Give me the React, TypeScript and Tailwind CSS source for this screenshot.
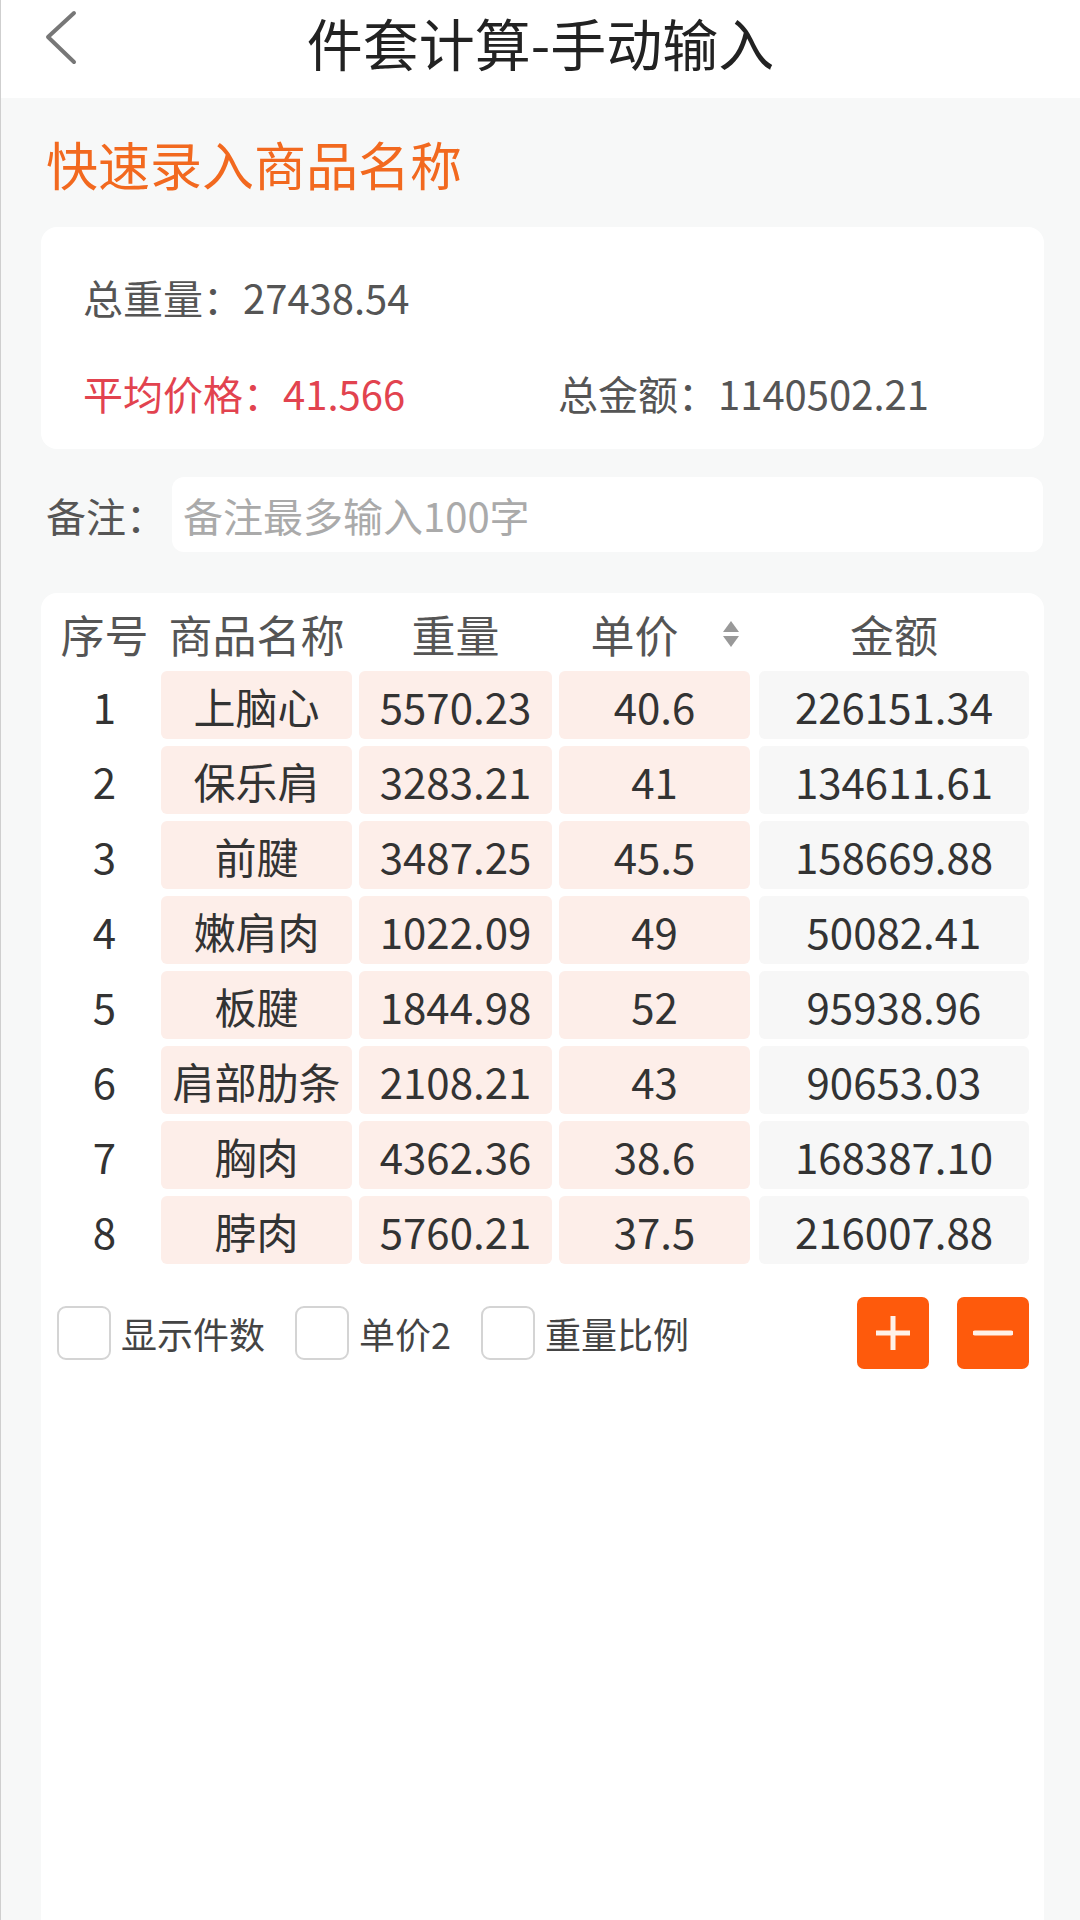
import React from 'react';

const rows = [
  { no: 1, name: '上脑心', weight: '5570.23', price: '40.6', amount: '226151.34' },
  { no: 2, name: '保乐肩', weight: '3283.21', price: '41', amount: '134611.61' },
  { no: 3, name: '前腱', weight: '3487.25', price: '45.5', amount: '158669.88' },
  { no: 4, name: '嫩肩肉', weight: '1022.09', price: '49', amount: '50082.41' },
  { no: 5, name: '板腱', weight: '1844.98', price: '52', amount: '95938.96' },
  { no: 6, name: '肩部肋条', weight: '2108.21', price: '43', amount: '90653.03' },
  { no: 7, name: '胸肉', weight: '4362.36', price: '38.6', amount: '168387.10' },
  { no: 8, name: '脖肉', weight: '5760.21', price: '37.5', amount: '216007.88' },
];

const font = { fontFamily: '"Noto Sans CJK SC", "Noto Sans", sans-serif' };

function Checkbox({ label }: { label: string }) {
  return (
    <div className="flex items-center gap-[10px]">
      <div className="h-[54px] w-[54px] rounded-[9px] border-2 border-[#d4d4d4] bg-white" />
      <span className="text-[36px] leading-none text-[#444]">{label}</span>
    </div>
  );
}

export default function App() {
  return (
    <div
      className="flex h-[1920px] w-[1080px] flex-col overflow-hidden border-l border-[#cfcfcf] bg-[#f7f8f8]"
      style={font}
    >
      {/* Top bar */}
      <div className="relative flex h-[98px] shrink-0 items-start justify-center bg-white pt-[14px]">
        <svg
          className="absolute left-[40px] top-[8px]"
          width="44"
          height="60"
          viewBox="0 0 44 60"
          fill="none"
        >
          <path
            d="M33 5 L7 29 L33 54"
            stroke="#777"
            strokeWidth="4"
            strokeLinecap="round"
            strokeLinejoin="round"
          />
        </svg>
        <h1 className="text-[56px] leading-none text-[#222]">件套计算-手动输入</h1>
      </div>

      <div className="mt-[36px] pl-[45px] text-[52px] leading-[60px] text-[#f2691f]">
        快速录入商品名称
      </div>

      {/* Summary */}
      <div className="ml-[40px] mt-[33px] h-[222px] w-[1003px] rounded-[16px] bg-white pl-[42px] pt-[46px] text-[40px] leading-[48px] text-[#555]">
        <div>总重量：27438.54</div>
        <div className="mt-[48px] flex">
          <div className="w-[475px] text-[#e2434f]">平均价格：41.566</div>
          <div>总金额：1140502.21</div>
        </div>
      </div>

      {/* Remark */}
      <div className="mt-[28px] flex items-center pl-[45px] pr-[37px]">
        <span className="w-[126px] text-[40px] text-[#555]">备注：</span>
        <div className="flex h-[75px] flex-1 items-center rounded-[12px] bg-white pl-[11px] text-[40px] text-[#aaa]">
          备注最多输入100字
        </div>
      </div>

      {/* Table */}
      <div className="ml-[40px] mt-[41px] w-[1003px] flex-1 rounded-t-[16px] bg-white pl-[14px] pr-[15px] pt-[4px]">
        <div className="grid grid-cols-[99px_191px_193px_191px_272px] gap-x-[7px] text-[44px] text-[#555]">
          <div className="flex h-[74px] items-center justify-center">序号</div>
          <div className="flex h-[74px] items-center justify-center">商品名称</div>
          <div className="flex h-[74px] items-center justify-center">重量</div>
          <div className="flex h-[74px] items-center justify-center gap-[42px] pl-[22px]">
            <span>单价</span>
            <svg width="20" height="30" viewBox="0 0 20 30">
              <path d="M10 2 L18 13 L2 13 Z" fill="#999" />
              <path d="M2 17 L18 17 L10 28 Z" fill="#999" />
            </svg>
          </div>
          <div className="flex h-[74px] items-center justify-center pl-[2px]">金额</div>
        </div>

        <div className="flex flex-col gap-[7px]">
          {rows.map((r) => (
            <div
              key={r.no}
              className="grid h-[68px] grid-cols-[99px_191px_193px_191px_272px] gap-x-[7px] text-[42px] text-[#333]"
            >
              <div className="flex items-center justify-center">{r.no}</div>
              <div className="flex items-center justify-center rounded-[6px] bg-[#fdeee9]">{r.name}</div>
              <div className="flex items-center justify-center rounded-[6px] bg-[#fdeee9]">{r.weight}</div>
              <div className="flex items-center justify-center rounded-[6px] bg-[#fdeee9]">{r.price}</div>
              <div className="ml-[2px] flex items-center justify-center rounded-[6px] bg-[#f7f7f7]">
                {r.amount}
              </div>
            </div>
          ))}
        </div>

        <div className="mt-[33px] flex h-[72px] items-center">
          <div className="flex items-center gap-[30px] pl-[2px]">
            <Checkbox label="显示件数" />
            <Checkbox label="单价2" />
            <Checkbox label="重量比例" />
          </div>
          <div className="ml-auto flex gap-[28px]">
            <button className="flex h-[72px] w-[72px] items-center justify-center rounded-[7px] bg-[#fe5a0c]">
              <svg width="40" height="40" viewBox="0 0 40 40">
                <path d="M20 3 V37 M3 20 H37" stroke="#fff1e8" strokeWidth="5" />
              </svg>
            </button>
            <button className="flex h-[72px] w-[72px] items-center justify-center rounded-[7px] bg-[#fe5a0c]">
              <svg width="40" height="40" viewBox="0 0 40 40">
                <path d="M2 20 H38" stroke="#fff1e8" strokeWidth="5" strokeLinecap="round" />
              </svg>
            </button>
          </div>
        </div>
      </div>
    </div>
  );
}
